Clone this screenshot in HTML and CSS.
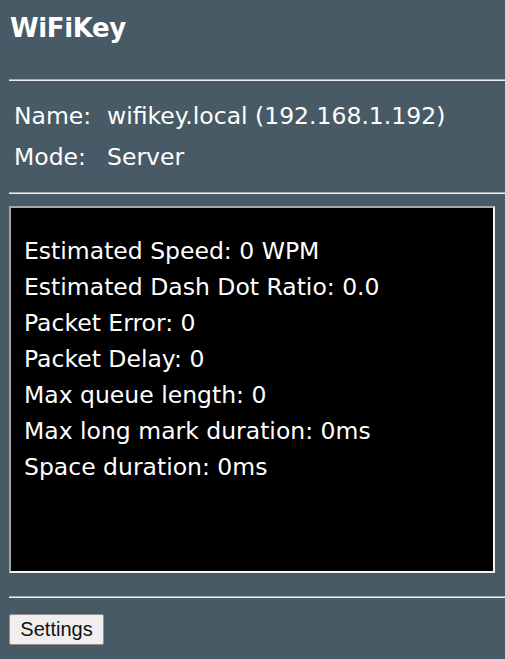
FILE: index.html
```html
<!DOCTYPE html>
<html>
<head>
<meta charset="utf-8">
<link rel="stylesheet" href="styles.css">
</head>
<body>
<div class="page">
  <h1 class="title">WiFiKey</h1>
  <hr class="rule rule-top">
  <table class="info">
    <tr><td class="label">Name:</td><td class="value">wifikey.local (192.168.1.192)</td></tr>
    <tr><td class="label">Mode:</td><td class="value">Server</td></tr>
  </table>
  <hr class="rule rule-mid">
  <div class="output">
    <div class="line">Estimated Speed: 0 WPM</div>
    <div class="line">Estimated Dash Dot Ratio: 0.0</div>
    <div class="line">Packet Error: 0</div>
    <div class="line">Packet Delay: 0</div>
    <div class="line">Max queue length: 0</div>
    <div class="line">Max long mark duration: 0ms</div>
    <div class="line">Space duration: 0ms</div>
  </div>
  <hr class="rule rule-bottom">
  <button class="btn">Settings</button>
</div>
</body>
</html>
```
FILE: styles.css
```css
html, body {
  margin: 0;
  padding: 0;
  background: #475a65;
  height: 100%;
}
.page {
  padding: 0 0 0 9px;
  font-family: "DejaVu Sans", Verdana, sans-serif;
  color: #ffffff;
  overflow: hidden;
}
.title {
  margin: 0;
  padding: 12px 0 0 1px;
  font-size: 26px;
  font-weight: bold;
  line-height: 32px;
  height: 55px;
  box-sizing: border-box;
  letter-spacing: -0.4px;
}
.rule {
  border: 0;
  border-top: 1px solid #a3acb2;
  border-bottom: 1px solid #eef1f3;
  height: 0;
  margin: 0;
}
.rule-top { margin-top: 24px; }
.info {
  border-collapse: collapse;
  margin: 14px 0 0 3px;
  font-size: 23.5px;
}
.info td {
  padding: 0 2px;
  height: 41px;
  vertical-align: middle;
}
.info .label { width: 89px; }
.rule-mid { margin-top: 15px; }
.output {
  margin-top: 12px;
  width: 486px;
  height: 367px;
  box-sizing: border-box;
  background: #000;
  border: 2px solid;
  border-color: #a6a6a6 #f2f2f2 #f2f2f2 #a6a6a6;
  padding: 25px 0 0 13px;
  font-size: 23.5px;
}
.line {
  height: 36px;
  line-height: 36px;
}
.rule-bottom { margin-top: 23px; }
.btn {
  margin-top: 16px;
  width: 95px;
  height: 31px;
  font-family: "Liberation Sans", Arial, sans-serif;
  font-size: 20px;
  color: #111;
  background: #efefef;
  border: 1px solid #8f8f8f;
  border-radius: 2px;
  padding: 0;
}
```
